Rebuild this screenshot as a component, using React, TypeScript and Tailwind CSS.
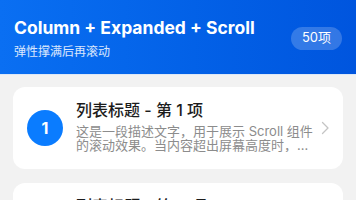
import { useMemo } from "react";

interface ListItem {
  id: number;
  title: string;
  description: string;
}

const DESC =
  "这是一段描述文字，用于展示 Scroll 组件的滚动效果。当内容超出屏幕高度时，可以上下滑动查看更多内容。";

function Chevron() {
  return (
    <svg
      width="8"
      height="14"
      viewBox="0 0 8 14"
      fill="none"
      className="shrink-0 ml-[6px]"
    >
      <polyline
        points="1.5,1.5 7,7 1.5,12.5"
        stroke="#c4c4c4"
        strokeWidth="1.3"
        strokeLinecap="round"
        strokeLinejoin="round"
      />
    </svg>
  );
}

function ItemCard({ item }: { item: ListItem }) {
  return (
    <div className="flex items-center bg-white rounded-[12px] px-[14px] h-[82px] shrink-0">
      <div className="w-[36px] h-[36px] rounded-full bg-[#0a7cff] flex items-center justify-center text-white text-[16px] font-bold shrink-0">
        {item.id}
      </div>
      <div className="flex-1 min-w-0 ml-[13px] pb-[6px]">
        <div className="text-[16px] leading-[22px] font-medium text-[#1c1c1c]">
          {item.title}
        </div>
        <p className="mt-[3px] text-[13px] leading-[14px] text-[#8c8c8c] line-clamp-2">
          {item.description}
        </p>
      </div>
      <Chevron />
    </div>
  );
}

export default function App() {
  const items = useMemo<ListItem[]>(
    () =>
      Array.from({ length: 50 }, (_, i) => ({
        id: i + 1,
        title: `列表标题 - 第 ${i + 1} 项`,
        description: DESC,
      })),
    []
  );

  return (
    <div
      className="w-[356px] h-[200px] flex flex-col bg-[#f2f2f2] overflow-hidden"
      style={{ fontFamily: 'Inter, "Noto Sans CJK SC", sans-serif' }}
    >
      <div className="flex items-center justify-between px-[14px] pt-[16px] pb-[14px] bg-gradient-to-r from-[#0a6ff2] to-[#0055de] shadow-[0_1px_0_#dde8f7] shrink-0">
        <div>
          <div className="text-white text-[17.5px] leading-[24px] font-bold">
            Column + Expanded + Scroll
          </div>
          <div className="mt-[4px] text-white/85 text-[12px] leading-[16px]">
            弹性撑满后再滚动
          </div>
        </div>
        <div className="bg-white/20 rounded-full px-[11px] h-[23px] flex items-center text-white text-[13px]">
          50项
        </div>
      </div>
      <div className="flex-1 min-h-0 overflow-y-auto flex flex-col gap-[14px] px-[13px] pt-[13px]">
        {items.map((item) => (
          <ItemCard key={item.id} item={item} />
        ))}
      </div>
    </div>
  );
}
